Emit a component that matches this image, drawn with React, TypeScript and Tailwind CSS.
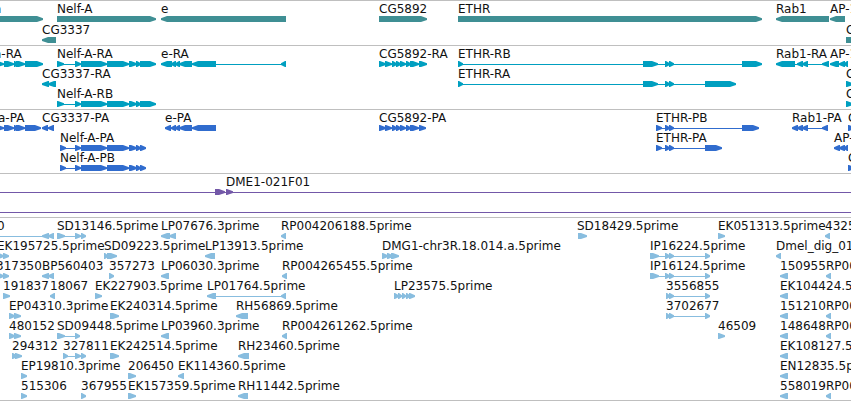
import { clsx } from "clsx";

type Exon = [start: number, end: number];

interface Feature {
  name: string;
  at: number;
  exons: Exon[];
  reverse?: boolean;
}

interface Track {
  id: string;
  color: string;
  tall?: boolean;
  tight?: boolean;
  spanning?: boolean;
  rows: Feature[][];
}

const fwd = (name: string, at: number, ...exons: Exon[]): Feature => ({ name, at, exons });
const rev = (name: string, at: number, ...exons: Exon[]): Feature => ({ name, at, exons, reverse: true });

const nelfCore: Exon[] = [[75, 81], [81, 107], [107, 129], [129, 137], [136, 141]];
const leftCore: Exon[] = [[-4, 4], [4, 14], [14, 18], [16, 25]];
const cg5892: Exon[] = [[379, 386], [385, 392], [392, 397], [396, 401], [400, 406], [406, 411], [410, 419]];
const eCore: Exon[] = [[171, 176], [175, 180], [179, 192], [192, 216]];
const ethrMid: Exon[] = [[665, 670], [669, 674]];

const tracks: Track[] = [
  {
    id: "gene",
    color: "text-[#3f8f94]",
    tall: true,
    tight: true,
    rows: [
      [
        fwd("a", -6, [-6, 43]),
        fwd("Nelf-A", 57, [57, 156]),
        rev("e", 161, [161, 286]),
        fwd("CG5892", 379, [379, 427]),
        fwd("ETHR", 458, [458, 762]),
        rev("Rab1", 776, [776, 829]),
        rev("AP-1", 830, [830, 845]),
      ],
      [rev("CG3337", 42, [42, 56]), fwd("CG", 846, [846, 880])],
    ],
  },
  {
    id: "transcript",
    color: "text-[#009fc0]",
    rows: [
      [
        fwd("a-RA", -6, ...leftCore, [25, 43]),
        fwd("Nelf-A-RA", 57, [57, 64], ...nelfCore, [140, 156]),
        rev("e-RA", 161, [161, 172], ...eCore, [281, 286]),
        fwd("CG5892-RA", 379, ...cg5892, [419, 427]),
        fwd("ETHR-RB", 458, [458, 463], [643, 658], ...ethrMid, [742, 762]),
        rev("Rab1-RA", 776, [776, 795], [797, 803], [802, 808], [822, 829]),
        rev("AP-1", 830, [830, 839], [839, 845], [844, 848]),
      ],
      [
        rev("CG3337-RA", 42, [42, 49], [48, 56]),
        fwd("ETHR-RA", 458, [458, 463], [643, 658], ...ethrMid, [705, 736]),
        fwd("CG", 846, [846, 853]),
      ],
      [fwd("Nelf-A-RB", 57, [57, 64], ...nelfCore, [140, 156]), fwd("CG", 846, [846, 853])],
    ],
  },
  {
    id: "protein",
    color: "text-[#306cce]",
    rows: [
      [
        fwd("a-PA", -2, ...leftCore, [25, 41]),
        rev("CG3337-PA", 42, [42, 48], [48, 54]),
        rev("e-PA", 165, [165, 171], ...eCore),
        fwd("CG5892-PA", 379, ...cg5892, [419, 426]),
        fwd("ETHR-PB", 656, [656, 662], ...ethrMid, [742, 759]),
        rev("Rab1-PA", 792, [792, 798], [797, 803], [802, 808], [822, 828]),
        fwd("CG", 848, [848, 855]),
      ],
      [
        fwd("Nelf-A-PA", 60, [60, 66], ...nelfCore, [140, 146]),
        fwd("ETHR-PA", 656, [656, 662], ...ethrMid, [705, 722]),
        rev("AP-1", 834, [834, 840], [839, 845], [844, 848]),
      ],
      [fwd("Nelf-A-PB", 60, [60, 66], ...nelfCore, [140, 146]), fwd("CG", 848, [848, 855])],
    ],
  },
  {
    id: "clone",
    color: "text-[#7358a8]",
    spanning: true,
    rows: [[fwd("", 215, [215, 225]), fwd("DME1-021F01", 226, [226, 233])], []],
  },
  {
    id: "est",
    color: "text-[#88bddf]",
    tight: true,
    rows: [
      [
        rev("0", -3, [-8, -2], [42, 49], [48, 54]),
        fwd("SD13146.5prime", 57, [57, 65], [75, 81], [81, 86]),
        rev("LP07676.3prime", 161, [161, 170], [169, 176]),
        rev("RP004206188.5prime", 281, [281, 286]),
        fwd("SD18429.5prime", 577, [578, 587]),
        fwd("EK051313.5prime", 718, [718, 725]),
        rev("4325", 825, [825, 830]),
      ],
      [
        fwd("EK195725.5prime", -3, [-2, 4], [3, 9]),
        fwd("SD09223.5prime", 104, [104, 108], [107, 117]),
        rev("LP13913.5prime", 205, [205, 215]),
        fwd("DMG1-chr3R.18.014.a.5prime", 382, [382, 388], [387, 393], [391, 399]),
        fwd("IP16224.5prime", 650, [650, 659], ...ethrMid, [705, 710]),
        rev("Dmel_dig_01", 776, [776, 781]),
      ],
      [
        fwd("317350", -4, [-2, 4], [3, 9]),
        rev("BP560403", 42, [42, 49], [48, 54]),
        fwd("357273", 109, [109, 114]),
        rev("LP06030.3prime", 161, [161, 169]),
        rev("RP004265455.5prime", 282, [282, 287]),
        fwd("IP16124.5prime", 650, [650, 659], ...ethrMid, [705, 710]),
        rev("150955", 780, [780, 788]),
        rev("RP00", 826, [826, 831]),
      ],
      [
        fwd("191837", 3, [3, 10]),
        rev("18067", 50, [50, 55]),
        fwd("EK227903.5prime", 95, [95, 102]),
        rev("LP01764.5prime", 207, [207, 216], [281, 286]),
        fwd("LP23575.5prime", 394, [394, 399], [398, 402], [402, 406], [406, 410], [409, 415]),
        fwd("3556855", 666, [666, 670], [669, 674], [705, 710]),
        rev("EK104424.5", 780, [780, 788]),
      ],
      [
        fwd("EP04310.3prime", 9, [9, 15], [14, 21]),
        fwd("EK240314.5prime", 110, [110, 119]),
        rev("RH56869.5prime", 236, [236, 248]),
        fwd("3702677", 666, [666, 670], [669, 674], [705, 710]),
        rev("151210", 780, [780, 788]),
        rev("RP00", 826, [826, 831]),
      ],
      [
        fwd("480152", 9, [9, 15], [14, 21]),
        fwd("SD09448.5prime", 57, [57, 65], [75, 80]),
        rev("LP03960.3prime", 161, [161, 169]),
        rev("RP004261262.5prime", 282, [282, 287]),
        fwd("46509", 718, [718, 725]),
        rev("148648", 780, [780, 788]),
        rev("RP00", 826, [826, 831]),
      ],
      [
        fwd("294312", 12, [12, 17], [15, 22]),
        fwd("327811", 63, [63, 68], [75, 81], [81, 86]),
        fwd("EK242514.5prime", 110, [110, 119]),
        rev("RH23460.5prime", 238, [238, 249]),
        rev("EK108127.5", 780, [780, 788]),
      ],
      [
        fwd("EP19810.3prime", 21, [21, 27]),
        fwd("206450", 128, [128, 136]),
        rev("EK114360.5prime", 178, [178, 184]),
        rev("EN12835.5p", 780, [780, 788]),
      ],
      [
        fwd("515306", 21, [21, 27]),
        fwd("367955", 81, [81, 86]),
        fwd("EK157359.5prime", 128, [128, 136]),
        rev("RH11442.5prime", 238, [238, 248]),
        rev("558019", 780, [780, 788]),
        rev("RP00", 826, [826, 831]),
      ],
    ],
  },
];

// Block with a blunt arrow head on the side the strand runs to
function exonPoints([start, end]: Exon, reverse?: boolean) {
  const tip = Math.min(6, end - start - 1);
  return reverse
    ? `${end},0 ${start + tip},0 ${start},2.3 ${start},4 ${start + tip},6 ${end},6`
    : `${start},0 ${end - tip},0 ${end},2.3 ${end},4 ${end - tip},6 ${start},6`;
}

function FeatureItem({ feature }: { feature: Feature }) {
  const { name, at, exons, reverse } = feature;
  const start = exons[0][0];
  const end = exons[exons.length - 1][1];
  return (
    <>
      <span className="absolute top-0 whitespace-nowrap text-[#111111]" style={{ left: at }}>
        {name}
      </span>
      <svg
        className="absolute top-[15px] h-[6px]"
        style={{ left: start, width: end - start }}
        viewBox={`${start} 0 ${end - start} 6`}
        fill="currentColor"
        aria-hidden="true"
      >
        {exons.length > 1 && <rect x={start} y={3} width={end - start} height={1} />}
        {exons.map((exon) => (
          <polygon key={exon[0]} points={exonPoints(exon, reverse)} />
        ))}
      </svg>
    </>
  );
}

function TrackSection({ track }: { track: Track }) {
  return (
    <section className={clsx("border-t border-[#bfbfbf]", track.color, track.tight ? "pb-[2px]" : "pb-[3px]")}>
      {track.rows.map((row, i) => (
        <div key={i} className={clsx("relative", track.tall ? "h-[21px]" : "h-5", track.spanning && "pt-[18px]")}>
          {track.spanning && <div className="h-px bg-current" />}
          {row.map((feature) => (
            <FeatureItem key={`${feature.name}${feature.at}`} feature={feature} />
          ))}
        </div>
      ))}
    </section>
  );
}

export default function App() {
  return (
    <main className="overflow-hidden border-b border-[#bfbfbf] bg-white font-['DejaVu_Sans',sans-serif] text-[12px] leading-[16px]">
      {tracks.map((track) => (
        <TrackSection key={track.id} track={track} />
      ))}
    </main>
  );
}
